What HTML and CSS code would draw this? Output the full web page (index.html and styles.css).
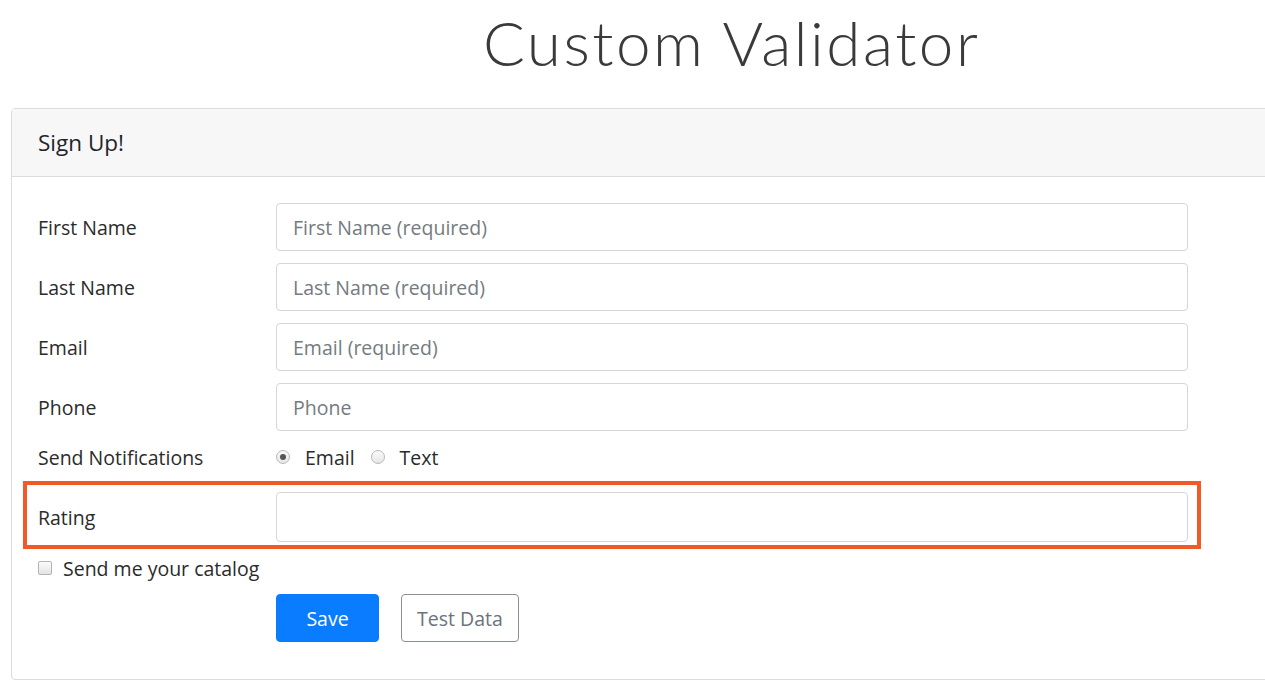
FILE: index.html
```html
<!DOCTYPE html>
<html>
<head>
<meta charset="utf-8">
<link rel="stylesheet" href="styles.css">
</head>
<body>
<h1 class="title">Custom Validator</h1>
<div class="card">
  <div class="card-header">Sign Up!</div>
  <form class="card-body">
    <div class="row">
      <label class="lbl">First Name</label>
      <input class="field" type="text" placeholder="First Name (required)">
    </div>
    <div class="row">
      <label class="lbl">Last Name</label>
      <input class="field" type="text" placeholder="Last Name (required)">
    </div>
    <div class="row">
      <label class="lbl">Email</label>
      <input class="field" type="text" placeholder="Email (required)">
    </div>
    <div class="row">
      <label class="lbl">Phone</label>
      <input class="field" type="text" placeholder="Phone">
    </div>
    <div class="row row-radio">
      <label class="lbl">Send Notifications</label>
      <div class="radios">
        <span class="radio checked"></span><span class="rtext">Email</span>
        <span class="radio"></span><span class="rtext">Text</span>
      </div>
    </div>
    <div class="highlight">
      <div class="row row-hl">
        <label class="lbl">Rating</label>
        <input class="field" type="text">
      </div>
    </div>
    <div class="check-row">
      <span class="checkbox"></span><span class="ctext">Send me your catalog</span>
    </div>
    <div class="buttons">
      <button type="button" class="btn btn-primary">Save</button>
      <button type="button" class="btn btn-outline">Test Data</button>
    </div>
  </form>
</div>
</body>
</html>
```
FILE: styles.css
```css
html, body {
  margin: 0;
  padding: 0;
  background: #fff;
  overflow: hidden;
}
body {
  font-family: "Open Sans", "Noto Sans", sans-serif;
  color: #212529;
  width: 1265px;
  height: 698px;
}
.title {
  margin: 0;
  padding: 4px 0 0 483px;
  height: 108px;
  box-sizing: border-box;
  font-family: "Lato", "Open Sans", sans-serif;
  font-weight: 300;
  font-size: 62px;
  line-height: 76px;
  color: #3a3a3a;
  letter-spacing: 2.5px;
}
.card {
  margin: 0 -30px 0 11px;
  border: 1px solid #dcdcdc;
  border-radius: 4px;
  height: 572px;
  box-sizing: border-box;
}
.card-header {
  background: #f7f7f7;
  border-bottom: 1px solid #dcdcdc;
  height: 68px;
  box-sizing: border-box;
  padding: 0 26px;
  display: flex;
  align-items: center;
  font-size: 22.5px;
  color: #212529;
}
.card-body {
  display: flex;
  flex-direction: column;
  padding: 26px 0 0 26px;
}
.row {
  display: flex;
  align-items: center;
  height: 48px;
  margin-bottom: 12px;
}
.lbl {
  width: 238px;
  font-size: 19.5px;
  color: #2b2b2b;
}
.field {
  width: 912px;
  height: 48px;
  box-sizing: border-box;
  border: 1px solid #d4d7da;
  border-radius: 4px;
  padding: 0 16px;
  font-family: inherit;
  font-size: 19.5px;
  color: #495057;
  background: #fff;
}
.field::placeholder {
  color: #757b80;
}
.row-radio {
  height: 28px;
  margin-top: 0;
  margin-bottom: 0;
}
.radios {
  display: flex;
  align-items: center;
}
.radio {
  width: 14px;
  height: 14px;
  border-radius: 50%;
  border: 1px solid #b9b9b9;
  box-sizing: border-box;
  background: linear-gradient(#fafafa, #e6e6e6);
  margin-right: 15px;
  position: relative;
}
.radio.checked::after {
  content: "";
  position: absolute;
  left: 3px;
  top: 3px;
  width: 6px;
  height: 6px;
  border-radius: 50%;
  background: #555;
}
.rtext {
  font-size: 19.5px;
  color: #2b2b2b;
  margin-right: 16px;
}
.highlight {
  margin: 10px 0 0 -15px;
  width: 1178px;
  height: 68px;
  box-sizing: border-box;
  border: 4px solid #f05a28;
  padding: 7px 0 0 11px;
}
.row-hl {
  height: 50px;
  margin: 0;
}
.row-hl .field {
  height: 50px;
}
.check-row {
  display: flex;
  align-items: center;
  height: 28px;
  margin-top: 5px;
}
.checkbox {
  width: 14px;
  height: 14px;
  border: 1px solid #b3b3b3;
  border-radius: 2px;
  box-sizing: border-box;
  background: linear-gradient(#fbfbfb, #e4e4e4);
  margin-right: 11px;
}
.ctext {
  font-size: 19.5px;
  color: #2b2b2b;
}
.buttons {
  display: flex;
  gap: 22px;
  margin: 12px 0 0 238px;
}
.btn {
  height: 48px;
  border-radius: 4px;
  font-family: inherit;
  font-size: 19.5px;
  padding: 0 10px;
  cursor: pointer;
}
.btn-primary {
  width: 103px;
  background: #0a7cff;
  border: 1px solid #0a7cff;
  color: #fff;
}
.btn-outline {
  width: 118px;
  background: #fff;
  border: 1px solid #8a8f94;
  color: #6c737a;
}
```
